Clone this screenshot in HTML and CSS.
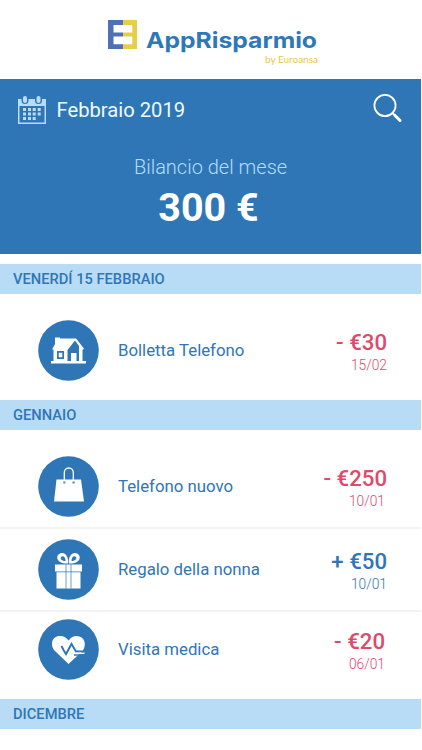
FILE: index.html
```html
<!DOCTYPE html>
<html lang="it">
<head>
<meta charset="utf-8">
<title>AppRisparmio</title>
<link rel="stylesheet" href="styles.css">
</head>
<body>
<main class="app">
  <header class="brand">
    <svg class="logo" viewBox="0 0 29 29">
      <path fill="#4d70b7" d="M0 0H15V5H5.500V12.500H15V16.500H5.500V24.300H15V29H0Z"/>
      <path fill="#e8cd48" d="M15 0H29V29H15V24.300H24.300V16.500H15V12.500H24.300V5H15Z"/>
    </svg>
    <div class="brand-text">
      <svg class="wordmark" viewBox="0 0 172 46">
        <text class="name" x="0" y="28" textLength="171" lengthAdjust="spacingAndGlyphs">AppRisparmio</text>
        <text class="by" x="119" y="43" textLength="53" lengthAdjust="spacingAndGlyphs">by Euroansa</text>
      </svg>
    </div>
  </header>

  <section class="hero">
    <div class="toolbar">
      <svg class="calendar" viewBox="0 0 28 28">
        <path fill="#b9dcf8" fill-rule="evenodd" d="M0 3H3.500V4.500A3.500 3.500 0 0 0 10.500 4.500V3H17V4.500A3.500 3.500 0 0 0 24 4.500V3H28V28H0ZM1.500 10V26.500H26.500V10Z"/>
        <rect x="5" y="0" width="4" height="7" rx="2" fill="#b9dcf8"/>
        <rect x="18.500" y="0" width="4" height="7" rx="2" fill="#b9dcf8"/>
        <path fill="#b9dcf8" d="M5 12h3v3h-3zM10 12h3v3h-3zM14.700 12h3v3h-3zM19.700 12h3v3h-3zM5 16.500h3v3h-3zM10 16.500h3v3h-3zM14.700 16.500h3v3h-3zM19.700 16.500h3v3h-3zM5 21h3v3h-3zM10 21h3v3h-3zM14.700 21h3v3h-3z"/>
      </svg>
      <h1 class="month">Febbraio 2019</h1>
      <svg class="search" viewBox="0 0 30 30">
        <circle cx="12" cy="11.500" r="10.600" fill="none" stroke="#fff" stroke-width="1.800"/>
        <path d="M19.500 19L22 21.500" stroke="#fff" stroke-width="2"/>
        <path d="M22 21.500L27 26.500" stroke="#fff" stroke-width="3" stroke-linecap="round"/>
      </svg>
    </div>
    <p class="caption">Bilancio del mese</p>
    <p class="balance">300 €</p>
  </section>

  <h2 class="band">VENERDÍ 15 FEBBRAIO</h2>
  <article class="row single">
    <svg class="badge" viewBox="0 0 61 61">
      <circle cx="30.500" cy="30.500" r="30.300" fill="#2e76b6"/>
      <path fill="#fff" fill-rule="evenodd" d="M17 17.500H22V18.500H38L46 28.500L44.500 30V41H48V43.500H13V41H15.500V29.500H14L17 24ZM19 31V39H26V31ZM20.700 32.700H24.300V37.300H20.700ZM37 20.500L29.500 30V41H33V33H38.500V41H41V26Z"/>
    </svg>
    <span class="label">Bolletta Telefono</span>
    <div class="figures out"><b class="amount">- €30</b><span class="date">15/02</span></div>
  </article>

  <h2 class="band">GENNAIO</h2>
  <article class="row bag">
    <svg class="badge" viewBox="0 0 61 61">
      <circle cx="30.500" cy="30.500" r="30.300" fill="#2e76b6"/>
      <path fill="#fff" d="M18.500 23.500H43L46 45.500H16Z"/>
      <path fill="none" stroke="#fff" stroke-width="1.300" d="M26.300 24V16.500a4.500 4.500 0 0 1 9 0V24"/>
      <circle cx="26.300" cy="26.500" r="1.300" fill="#6c9bc7"/><circle cx="35.600" cy="26.500" r="1.300" fill="#6c9bc7"/>
    </svg>
    <span class="label">Telefono nuovo</span>
    <div class="figures out"><b class="amount">- €250</b><span class="date shifted">10/01</span></div>
  </article>
  <article class="row gift">
    <svg class="badge" viewBox="0 0 61 61">
      <circle cx="30.500" cy="30.500" r="30.300" fill="#2e76b6"/>
      <path fill="#fff" d="M17 25.500H44V32.500H17ZM18.500 33.200H42.500V49.500H18.500Z"/>
      <path fill="none" stroke="#2e76b6" stroke-width=".7" d="M28 25.500V49.500M33 25.500V49.500"/>
      <path fill="#fff" fill-rule="evenodd" d="M30 24.500C31 19 28 14 24 14C20 14 18 18 20 21C22 24 26 24.500 30 24.500ZM27.500 22C24 22 22 20 23 18C25 16 27.500 18 27.500 22ZM31 24.500C30 19 33 14 37 14C41 14 43 18 41 21C39 24 35 24.500 31 24.500ZM33.500 22C37 22 39 20 38 18C36 16 33.500 18 33.500 22Z"/>
    </svg>
    <span class="label">Regalo della nonna</span>
    <div class="figures in"><b class="amount">+ €50</b><span class="date">10/01</span></div>
  </article>
  <article class="row visit">
    <svg class="badge" viewBox="0 0 61 61">
      <circle cx="30.500" cy="30.500" r="30.300" fill="#2e76b6"/>
      <path fill="#fff" d="M30.500 45L17 32C12 27 13 17 22 17C26 17 28.500 19 30.500 21.500C32.500 19 35 17 38.500 17C47 17 49 26 44.500 32Z"/>
      <path fill="none" stroke="#2e76b6" stroke-width="1.900" d="M23.500 27L25.500 31L28 35L33.500 25L38 32.500H47"/>
      <path stroke="#2e76b6" stroke-width="1.500" d="M36 36H47"/>
      <path stroke="#fff" stroke-width="1.500" d="M38 34.300H46.500"/>
    </svg>
    <span class="label">Visita medica</span>
    <div class="figures out early"><b class="amount">- €20</b><span class="date">06/01</span></div>
  </article>

  <h2 class="band">DICEMBRE</h2>
</main>
</body>
</html>
```
FILE: styles.css
```css
* { box-sizing: border-box; }
body {
  margin: 0;
  background: #fff;
  font-family: Roboto, "Liberation Sans", sans-serif;
  color: #2e76b6;
}
h1, h2, p { margin: 0; font-weight: 400; }
svg { display: block; flex: none; }
.app { width: 421px; height: 750px; overflow: hidden; }

.brand { display: flex; height: 79px; padding: 20px 0 0 108px; }
.logo { width: 29px; height: 29px; }
.brand-text { padding-left: 9px; }
.wordmark { width: 172px; height: 46px; overflow: visible; }
.name { font: 700 22px Inter, sans-serif; fill: #2e78b7; }
.by { font: 400 9.500px Lato, sans-serif; fill: #e5c94c; }

.hero { height: 175px; margin-bottom: 10px; background: #2e76b6; text-align: center; }
.toolbar { display: flex; align-items: flex-start; padding: 15px 18px 0 18px; height: 74px; }
.calendar { width: 28px; height: 28px; margin-top: 2px; }
.month { margin-left: 10.500px; font-size: 20.200px; line-height: 33px; color: #f0fbff; }
.search { width: 30px; height: 30px; margin-left: auto; }
.caption { font-size: 20px; font-weight: 300; line-height: 28px; color: #b5dcfa; }
.balance { margin-top: 6px; padding-right: 4px; font-size: 39.500px; font-weight: 700; line-height: 42px; color: #fff; }

.band {
  height: 30px;
  padding-left: 13px;
  background: #b9dcf6;
  font-size: 14.700px;
  font-weight: 500;
  line-height: 31px;
}

.row { display: flex; align-items: flex-start; padding-left: 38px; padding-right: 34px; }
.single { height: 106px; padding-top: 26px; }
.bag { height: 99px; padding-top: 26px; border-bottom: 2px solid #f4f2f4; }
.gift { height: 83px; padding-top: 10px; border-bottom: 2px solid #f4f2f4; }
.visit { height: 87px; padding-top: 7px; }
.badge { width: 61px; height: 61px; }
.label { margin-left: 19px; font-size: 16.800px; line-height: 61px; }
.figures { display: flex; flex-direction: column; align-items: flex-end; margin-left: auto; padding-top: 9px; }
.amount { font-size: 22.200px; font-weight: 500; line-height: 27px; }
.date { margin-top: -1px; font-size: 13.800px; font-weight: 300; line-height: 20px; }
.out { color: #dc4a6c; }
.early { padding-right: 2px; }
.shifted { padding-right: 2px; }
```
